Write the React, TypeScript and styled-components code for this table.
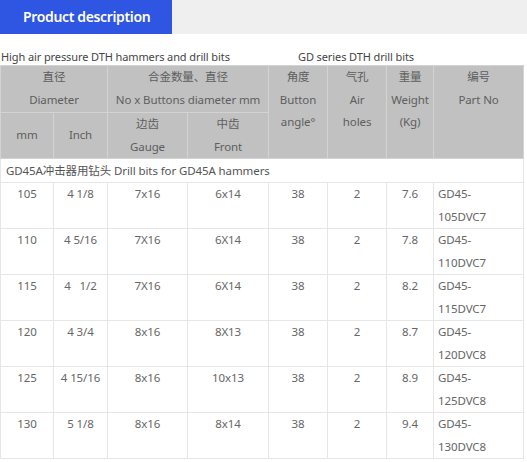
import React from "react";
import styled, { createGlobalStyle } from "styled-components";

const Global = createGlobalStyle`
  html, body { margin: 0; padding: 0; background: #ffffff; }
  body { font-family: "Noto Sans", "Noto Sans CJK SC", sans-serif; }
`;

const Page = styled.div`
  width: 527px;
  font-family: "Noto Sans", "Noto Sans CJK SC", sans-serif;
  color: #666;
`;

const TabBar = styled.div`
  display: flex;
  height: 34px;
  background: #efefef;
`;

const Tab = styled.div`
  width: 172px;
  box-sizing: border-box;
  padding-left: 23px;
  background: #2f55e3;
  color: #ffffff;
  font-size: 14px;
  font-weight: 600;
  letter-spacing: -0.35px;
  line-height: 34px;
`;

const Captions = styled.div`
  display: grid;
  grid-template-columns: 297px 1fr;
  padding-left: 1px;
  height: 31px;
  align-items: end;
  font-size: 11px;
  letter-spacing: -0.1px;
  line-height: 16px;
  color: #444;
`;

const Caption = styled.span``;

const Table = styled.table`
  width: 523px;
  border-collapse: collapse;
  table-layout: fixed;
  font-size: 11.5px;
  letter-spacing: -0.1px;
  line-height: 22.5px;
`;

const HeadCell = styled.th<{ $middle?: boolean }>`
  background: #c1c1c1;
  border: 1px solid #d3d3d3;
  color: #5e5e5e;
  font-weight: 400;
  padding: 0;
  text-align: center;
  vertical-align: ${(p) => (p.$middle ? "middle" : "top")};
`;

const HeadRow = styled.tr<{ $h: number }>`
  height: ${(p) => p.$h}px;
`;

const GroupCell = styled.td`
  border: 1px solid #e6e6e6;
  padding: 0 0 0 5px;
  color: #555;
  height: 23px;
  line-height: 22px;
  white-space: nowrap;
`;

const DataRow = styled.tr`
  height: 46px;
`;

const Cell = styled.td<{ $left?: boolean }>`
  border: 1px solid #e6e6e6;
  padding: 0;
  padding-left: ${(p) => (p.$left ? "4px" : "0")};
  text-align: ${(p) => (p.$left ? "left" : "center")};
  vertical-align: top;
  color: #666;
`;

const rows = [
  ["105", "4 1/8", "7x16", "6x14", "38", "2", "7.6", "GD45-", "105DVC7"],
  ["110", "4 5/16", "7X16", "6X14", "38", "2", "7.8", "GD45-", "110DVC7"],
  ["115", "4\u00a0\u00a0 1/2", "7X16", "6X14", "38", "2", "8.2", "GD45-", "115DVC7"],
  ["120", "4 3/4", "8x16", "8X13", "38", "2", "8.7", "GD45-", "120DVC8"],
  ["125", "4 15/16", "8x16", "10x13", "38", "2", "8.9", "GD45-", "125DVC8"],
  ["130", "5 1/8", "8x16", "8x14", "38", "2", "9.4", "GD45-", "130DVC8"],
];

const widths = [53, 54, 80, 81, 59, 59, 47, 90];

export default function App() {
  return (
    <Page>
      <Global />
      <TabBar>
        <Tab>Product description</Tab>
      </TabBar>
      <Captions>
        <Caption>High air pressure DTH hammers and drill bits</Caption>
        <Caption>GD series DTH drill bits</Caption>
      </Captions>
      <Table>
        <colgroup>
          {widths.map((w, i) => (
            <col key={i} style={{ width: w }} />
          ))}
        </colgroup>
        <thead>
          <HeadRow $h={47}>
            <HeadCell colSpan={2}>
              直径
              <br />
              Diameter
            </HeadCell>
            <HeadCell colSpan={2}>
              合金数量、直径
              <br />
              No x Buttons diameter mm
            </HeadCell>
            <HeadCell rowSpan={2}>
              角度
              <br />
              Button
              <br />
              angle°
            </HeadCell>
            <HeadCell rowSpan={2}>
              气孔
              <br />
              Air
              <br />
              holes
            </HeadCell>
            <HeadCell rowSpan={2}>
              重量
              <br />
              Weight
              <br />
              (Kg)
            </HeadCell>
            <HeadCell rowSpan={2}>
              编号
              <br />
              Part No
            </HeadCell>
          </HeadRow>
          <HeadRow $h={45}>
            <HeadCell $middle>mm</HeadCell>
            <HeadCell $middle>Inch</HeadCell>
            <HeadCell $middle>
              边齿
              <br />
              Gauge
            </HeadCell>
            <HeadCell $middle>
              中齿
              <br />
              Front
            </HeadCell>
          </HeadRow>
        </thead>
        <tbody>
          <tr>
            <GroupCell colSpan={8}>GD45A冲击器用钻头 Drill bits for GD45A hammers</GroupCell>
          </tr>
          {rows.map((r) => (
            <DataRow key={r[0]}>
              {r.slice(0, 7).map((v, i) => (
                <Cell key={i}>{v}</Cell>
              ))}
              <Cell $left>
                {r[7]}
                <br />
                {r[8]}
              </Cell>
            </DataRow>
          ))}
        </tbody>
      </Table>
    </Page>
  );
}
